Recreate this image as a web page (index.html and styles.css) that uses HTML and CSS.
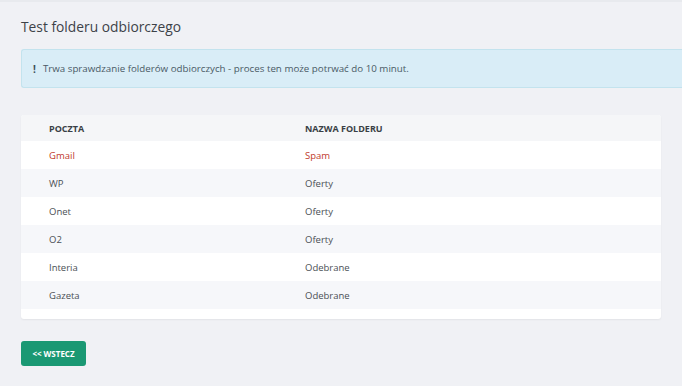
FILE: index.html
```html
<!DOCTYPE html>
<html lang="pl">
<head>
    <meta charset="UTF-8">
    <meta name="viewport" content="width=device-width, initial-scale=1.0">
    <title>Test folderu odbiorczego</title>
    <link rel="stylesheet" href="styles.css">
</head>
<body>
    <div class="page">
        <h1>Test folderu odbiorczego</h1>

        <div class="alert">
            <span class="alert-mark">!</span>
            Trwa sprawdzanie folderów odbiorczych - proces ten może potrwać do 10 minut.
        </div>

        <div class="card">
            <div class="row head">
                <div>POCZTA</div>
                <div>NAZWA FOLDERU</div>
            </div>
            <div class="row danger">
                <div>Gmail</div>
                <div>Spam</div>
            </div>
            <div class="row">
                <div>WP</div>
                <div>Oferty</div>
            </div>
            <div class="row">
                <div>Onet</div>
                <div>Oferty</div>
            </div>
            <div class="row">
                <div>O2</div>
                <div>Oferty</div>
            </div>
            <div class="row">
                <div>Interia</div>
                <div>Odebrane</div>
            </div>
            <div class="row">
                <div>Gazeta</div>
                <div>Odebrane</div>
            </div>
        </div>

        <button class="btn-back">&lt;&lt; WSTECZ</button>
    </div>
</body>
</html>
```

FILE: styles.css
```css
:root {
    --page-bg: #f0f1f5;
    --text-color: #3a3f45;
    --stripe: #f6f7fa;
    --accent: #1a9873;
    --danger: #c0392b;
}

* {
    margin: 0;
    padding: 0;
    box-sizing: border-box;
}

body {
    font-family: 'Open Sans', 'Noto Sans', sans-serif;
    background-color: var(--page-bg);
    color: var(--text-color);
    border-top: 2px solid #e8eaee;
    overflow: hidden;
}

.page {
    padding: 15px 0 0 21px;
}

h1 {
    font-size: 13.8px;
    font-weight: 400;
    line-height: 20px;
    color: #3d4248;
    margin-bottom: 12px;
}

.alert {
    background-color: #d9edf7;
    border: 1px solid #c3e3ee;
    border-right: none;
    border-radius: 3px 0 0 3px;
    height: 39px;
    padding: 0 0 0 11px;
    display: flex;
    align-items: center;
    font-size: 9.75px;
    color: #4a5a66;
    margin-bottom: 27px;
}

.alert-mark {
    font-weight: 700;
    font-size: 10px;
    color: #3c4c58;
    margin-right: 7px;
}

.card {
    width: 640px;
    background-color: #ffffff;
    border-radius: 3px;
    box-shadow: 0 1px 2px rgba(0, 0, 0, 0.06);
    padding-bottom: 10px;
    margin-bottom: 22px;
    overflow: hidden;
}

.row {
    display: grid;
    grid-template-columns: 256px 1fr;
    padding-left: 28px;
    height: 28px;
    align-items: center;
    font-size: 9.5px;
    color: #4a4f55;
}

.row:nth-child(odd) {
    background-color: var(--stripe);
}

.row.head {
    height: 26px;
    font-weight: 700;
    font-size: 9px;
    color: #3a3f45;
    background-color: #f5f6f8;
}

.row.danger {
    color: var(--danger);
}

.btn-back {
    display: block;
    width: 65px;
    height: 25px;
    background-color: var(--accent);
    color: #ffffff;
    border: none;
    border-radius: 3px;
    font-family: 'Open Sans', sans-serif;
    font-size: 8px;
    font-weight: 700;
    cursor: pointer;
}
```
